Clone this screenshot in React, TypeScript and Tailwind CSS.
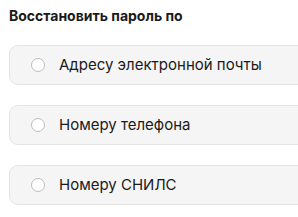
const options = ['Адресу электронной почты', 'Номеру телефона', 'Номеру СНИЛС'];

export default function App() {
  return (
    <div className="w-[298px] h-[217px] overflow-hidden bg-white pl-[9px] pt-[6px] font-['Inter',sans-serif] text-[#1a1a1a]">
      <h1 className="text-[14px] font-bold leading-[20px]">Восстановить пароль по</h1>
      <div className="mt-[19px] flex flex-col gap-[20px] w-[310px]">
        {options.map((o) => (
          <label
            key={o}
            className="flex h-[40px] items-center rounded-[9px] border border-[#e4e4e4] bg-[#f5f5f5] pl-[21px]"
          >
            <span className="h-[14px] w-[14px] shrink-0 rounded-full border border-[#bdbdbd] bg-white" />
            <span className="ml-[14px] text-[15px] leading-[18px]">{o}</span>
          </label>
        ))}
      </div>
    </div>
  );
}
